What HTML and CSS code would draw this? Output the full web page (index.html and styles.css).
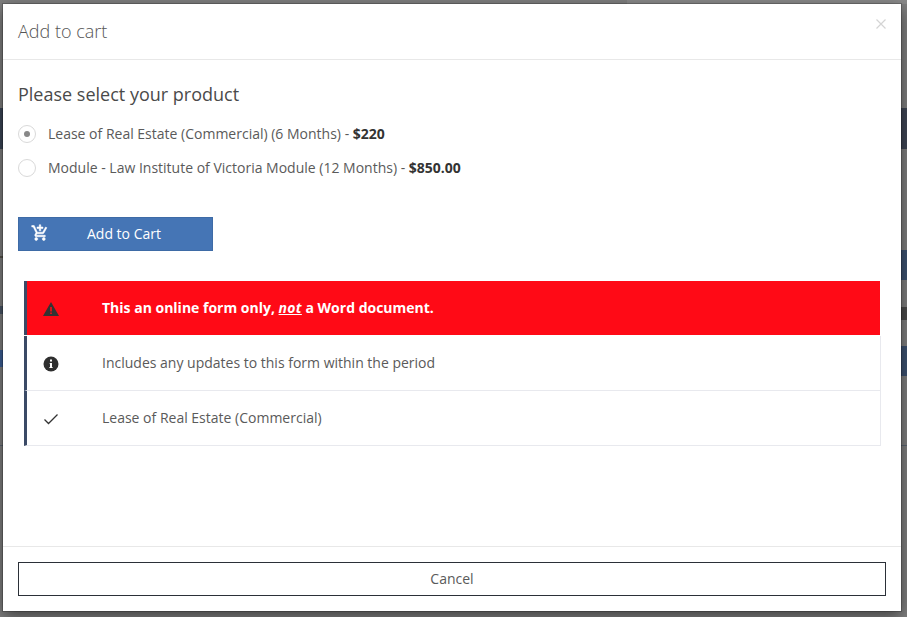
FILE: index.html
```html
<!DOCTYPE html>
<html lang="en">
<head>
<meta charset="utf-8">
<title>Add to cart</title>
<link rel="stylesheet" href="styles.css">
</head>
<body>
<div class="backdrop">
  <span class="strip strip-top"></span>
  <span class="strip strip-l1"></span>
  <span class="strip strip-l2"></span>
  <span class="strip strip-l3"></span>
  <span class="strip strip-l4"></span>
  <span class="strip strip-l5"></span>
  <span class="strip strip-r1"></span>
  <span class="strip strip-r2"></span>
  <span class="strip strip-r4"></span>
  <span class="strip strip-r3"></span>
  <span class="strip strip-r5"></span>
</div>
<div class="modal">
  <header class="modal-head">
    <h1 class="modal-title">Add to cart</h1>
    <button class="close" aria-label="Close">
      <svg width="10" height="10" viewBox="0 0 10 10"><path d="M.5.5l9 9M9.500.5l-9 9" stroke="#d4d4d4" stroke-width="1.200" fill="none"/></svg>
    </button>
  </header>
  <main class="modal-body">
    <h2 class="prompt">Please select your product</h2>
    <label class="option">
      <span class="radio radio-on"></span>
      <span class="option-text">Lease of Real Estate (Commercial) (6 Months) - <b>$220</b></span>
    </label>
    <label class="option">
      <span class="radio"></span>
      <span class="option-text">Module - Law Institute of Victoria Module (12 Months) - <b>$850.00</b></span>
    </label>
    <button class="add-btn">
      <svg class="cart" width="18" height="18" viewBox="0 0 24 24" fill="#fff" stroke="#fff" stroke-width=".7"><path d="M11 9h2V6h3V4h-3V1h-2v3H8v2h3v3zm-4 9c-1.100 0-1.990.9-1.990 2S5.900 22 7 22s2-.9 2-2-.9-2-2-2zm10 0c-1.100 0-1.990.9-1.990 2s.89 2 1.990 2 2-.9 2-2-.9-2-2-2zm-9.830-3.250l.03-.12.9-1.630h7.450c.75 0 1.410-.41 1.750-1.030l3.860-7.010L19.420 4h-.01l-1.100 2-2.760 5H8.530l-.13-.27L6.160 6l-.95-2-.94-2H1v2h2l3.600 7.590-1.350 2.450c-.16.280-.25.610-.25.960 0 1.100.9 2 2 2h12v-2H7.420c-.13 0-.25-.110-.25-.250z"/></svg>
      <span class="add-label">Add to Cart</span>
    </button>
    <ul class="notes">
      <li class="note note-alert">
        <span class="note-icon">
          <svg width="16" height="14" viewBox="0 0 16 14"><path d="M8 0l8 14H0z" fill="#333"/><path d="M7.200 5h1.600v4.500H7.200zM7.200 10.500h1.600V12H7.200z" fill="#ff0a16"/></svg>
        </span>
        <span class="note-text">This an online form only, <em>not</em> a Word document.</span>
      </li>
      <li class="note">
        <span class="note-icon">
          <svg width="16" height="16" viewBox="0 0 16 16"><circle cx="8" cy="8" r="7.500" fill="#2f2f2f"/><path d="M7 3.500h2v2H7zM6.700 7h2.300v4h.6v1H6.400v-1H7V8h-.3z" fill="#fff"/></svg>
        </span>
        <span class="note-text">Includes any updates to this form within the period</span>
      </li>
      <li class="note">
        <span class="note-icon">
          <svg width="16" height="14" viewBox="0 0 16 14"><path d="M1.500 7.500l4 4L14.500 2.500" fill="none" stroke="#333" stroke-width="1.300"/></svg>
        </span>
        <span class="note-text">Lease of Real Estate (Commercial)</span>
      </li>
    </ul>
  </main>
  <footer class="modal-foot">
    <button class="cancel">Cancel</button>
  </footer>
</div>
</body>
</html>
```

FILE: styles.css
```css
* { box-sizing: border-box; }
html, body { margin: 0; height: 100%; }
body {
  width: 907px;
  height: 617px;
  overflow: hidden;
  padding: 4px 6px 6px 3px;
  background: #7f7f7f;
  font-family: "Open Sans", "Noto Sans", sans-serif;
  color: #444;
  font-size: 14px;
}
.backdrop { position: absolute; inset: 0; z-index: 0; overflow: hidden; }
.strip { position: absolute; display: block; }
.strip-top { right: 0; top: 0; width: 280px; height: 4px; background: #8a8a8a; }
.strip-l1 { left: 0; top: 108px; width: 3px; height: 41px; background: #3b4656; }
.strip-l2 { left: 0; top: 256px; width: 3px; height: 2px; background: #55524a; }
.strip-l3 { left: 0; top: 306px; width: 3px; height: 8px; background: #4a5666; }
.strip-l4 { left: 0; top: 350px; width: 3px; height: 17px; background: #3c5f95; }
.strip-l5 { left: 0; top: 445px; width: 3px; height: 1px; background: #5a6470; }
.strip-r1 { right: 0; top: 108px; width: 6px; height: 41px; background: #3f4655; }
.strip-r2 { right: 0; top: 250px; width: 6px; height: 30px; background: #3c5170; }
.strip-r4 { right: 0; top: 307px; width: 6px; height: 13px; background: #4a4a4a; }
.strip-r3 { right: 0; top: 346px; width: 6px; height: 30px; background: #3c5170; }
.strip-r5 { right: 0; top: 445px; width: 6px; height: 1px; background: #5a6470; }
.modal {
  position: relative;
  z-index: 1;
  width: 898px;
  height: 607px;
  background: #fff;
  display: flex;
  flex-direction: column;
  outline: 1px solid rgba(0, 0, 0, .2);
  box-shadow: 0 5px 15px rgba(0, 0, 0, .5);
}
.modal-head {
  height: 56px;
  flex: none;
  display: flex;
  align-items: center;
  justify-content: space-between;
  padding: 0 15px;
  border-bottom: 1px solid #e8e8e8;
}
.modal-title {
  margin: 0 0 2px;
  font-size: 18px;
  font-weight: 300;
  color: #555;
  line-height: 24px;
}
.close {
  align-self: flex-start;
  margin-top: 15px;
  padding: 0;
  border: 0;
  background: none;
  line-height: 0;
}
.modal-body {
  flex: 1;
  padding: 0 15px;
  display: flex;
  flex-direction: column;
}
.prompt {
  margin: 21px 0 0;
  font-size: 18px;
  line-height: 26px;
  font-weight: 400;
  color: #4a4a4a;
}
.option {
  display: flex;
  align-items: center;
  gap: 12px;
  height: 34px;
  font-size: 14px;
  color: #5a5a5a;
}
.prompt + .option { margin-top: 10px; }
.option-text { margin-bottom: 2px; }
.option b { color: #333; font-weight: 700; }
.radio {
  width: 18px;
  height: 18px;
  border: 1px solid #d9d9d9;
  border-radius: 50%;
  display: flex;
  align-items: center;
  justify-content: center;
  flex: none;
}
.radio-on::after {
  content: "";
  width: 6px;
  height: 6px;
  border-radius: 50%;
  background: #888;
}
.add-btn {
  margin-top: 32px;
  width: 195px;
  height: 34px;
  flex: none;
  display: flex;
  align-items: center;
  padding: 0 0 0 12px;
  background: #4575b5;
  border: 1px solid #3e6ba6;
  color: #fff;
  font: 500 14px "Open Sans", sans-serif;
}
.cart { margin-bottom: 2px; flex: none; }
.add-label { margin: 0 0 2px 29px; width: 92px; text-align: center; }
.notes {
  list-style: none;
  margin: 30px 5px 0 6px;
  padding: 0;
}
.note {
  display: flex;
  align-items: center;
  height: 55px;
  border: 1px solid #e8e9ee;
  border-top: 0;
  border-left: 3px solid #3b4a66;
  font-size: 14px;
  color: #5a5a5a;
}
.note-alert {
  height: 54px;
  background: #ff0a16;
  border: 0;
  border-left: 3px solid #3b4a66;
  color: #fff;
  font-weight: 700;
  margin: 0 1px 1px 0;
}
.note-icon {
  width: 75px;
  padding: 2px 0 0 16px;
  flex: none;
  display: flex;
  align-items: center;
}
.note-text { margin-bottom: 2px; }
.note-text em { text-decoration: underline; letter-spacing: .3px; }
.modal-foot {
  height: 65px;
  flex: none;
  border-top: 1px solid #e8e8e8;
  padding: 15px;
}
.cancel {
  display: block;
  width: 100%;
  height: 34px;
  padding: 0 0 2px;
  background: #fff;
  border: 1px solid #2b3038;
  color: #5a5a5a;
  font: 400 14px "Open Sans", sans-serif;
}
```
